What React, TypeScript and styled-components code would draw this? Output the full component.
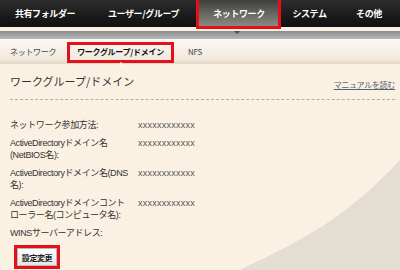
import React from "react";
import styled, { createGlobalStyle, css } from "styled-components";

const Global = createGlobalStyle`
  html, body { margin: 0; padding: 0; background: #fbf1e2; }
  body { font-family: "Liberation Sans", "Noto Sans CJK JP", sans-serif; }
`;

const Page = styled.div`
  position: relative;
  width: 400px;
  height: 270px;
  overflow: hidden;
  background: #fbf1e2;
`;

const redBox = css`
  content: "";
  position: absolute;
  border: 3px solid #e5101a;
  z-index: 5;
  pointer-events: none;
`;

const TopNav = styled.nav`
  display: flex;
  height: 27px;
  background: linear-gradient(#2e2e2e, #1a1a1a 60%, #111);
`;

const NavItem = styled.div<{ $w: number; $active?: boolean }>`
  position: relative;
  flex: 0 0 ${(p) => p.$w}px;
  display: flex;
  align-items: center;
  justify-content: center;
  color: #fff;
  font-family: "Noto Sans CJK JP", sans-serif;
  font-weight: 700;
  font-size: 9px;
  letter-spacing: -0.4px;
  ${(p) =>
    p.$active &&
    css`
      background: linear-gradient(#3e3e3c, #6a6a66 55%, #8c8c86);
      &::after {
        ${redBox};
        top: -3px;
        bottom: -2px;
        left: -1px;
        right: 0;
      }
    `}
`;

const Strip = styled.div`
  height: 8px;
  padding-left: 234px;
  box-sizing: border-box;
  background: linear-gradient(#8c8c8c, #b6b6b4);
`;

const StripArrow = styled.div`
  width: 0;
  height: 0;
  margin-top: 4px;
  border-left: 3px solid transparent;
  border-right: 3px solid transparent;
  border-top: 3px solid #4a4a4a;
`;

const SubNav = styled.div`
  display: flex;
  height: 25px;
  padding-left: 10px;
  background: linear-gradient(#fdf9f3, #f1e9de 80%, #e3d7c6);
`;

const SubItem = styled.div<{ $w: number; $indent?: number; $active?: boolean; $center?: boolean }>`
  position: relative;
  flex: 0 0 ${(p) => p.$w}px;
  box-sizing: border-box;
  padding-left: ${(p) => p.$indent ?? 0}px;
  display: flex;
  align-items: center;
  justify-content: ${(p) => (p.$center ? "center" : "flex-start")};
  font-family: "Noto Sans CJK JP", sans-serif;
  font-size: 8px;
  letter-spacing: -0.3px;
  color: ${(p) => (p.$active ? "#111" : "#444")};
  font-weight: ${(p) => (p.$active ? 700 : 400)};
  ${(p) =>
    p.$active &&
    css`
      &::after {
        ${redBox};
        top: 3px;
        bottom: 1px;
        left: 0;
        right: 0;
      }
      &::before {
        content: "";
        position: absolute;
        left: 50%;
        bottom: -1px;
        margin-left: -3px;
        border-left: 3px solid transparent;
        border-right: 3px solid transparent;
        border-bottom: 3px solid #fffaf2;
        z-index: 6;
      }
    `}
`;

const Swoosh = styled.svg`
  position: absolute;
  right: 0;
  bottom: 0;
`;

const Content = styled.main`
  position: relative;
  padding: 0 5px 0 10px;
`;

const Header = styled.div`
  display: flex;
  justify-content: space-between;
  align-items: flex-start;
  padding: 10px 0 8px;
  border-bottom: 1px dashed #b4aea6;
`;

const Title = styled.h1`
  margin: 0;
  font-family: "Noto Sans CJK JP", sans-serif;
  font-weight: 400;
  font-size: 11px;
  line-height: 14px;
  color: #333;
`;

const ManualLink = styled.a`
  margin-top: 5px;
  font-family: "Noto Sans CJK JP", sans-serif;
  font-size: 8px;
  line-height: 12px;
  letter-spacing: -0.3px;
  color: #556070;
  text-decoration: underline;
  text-underline-offset: 1px;
`;

const Fields = styled.dl`
  display: grid;
  grid-template-columns: 128px 1fr;
  row-gap: 6px;
  margin: 19px 0 0;
`;

const Label = styled.dt`
  margin: 0;
  font-size: 9px;
  line-height: 12px;
  letter-spacing: -0.4px;
  color: #333;
  white-space: nowrap;
`;

const Value = styled.dd`
  margin: 0;
  font-size: 9px;
  line-height: 12px;
  letter-spacing: 0.25px;
  color: #555;
`;

const SubmitButton = styled.button`
  position: relative;
  display: block;
  width: 40px;
  height: 18px;
  margin: 9px 0 0 7px;
  padding: 0;
  border: 1px solid #b8b8b8;
  background: linear-gradient(#ffffff, #e6e6e6);
  font-family: "Noto Sans CJK JP", sans-serif;
  font-size: 8px;
  font-weight: 700;
  letter-spacing: -0.4px;
  color: #222;
  &::after {
    ${redBox};
    top: -4px;
    bottom: -4px;
    left: -4px;
    right: -4px;
  }
`;

const navItems = [
  { label: "共有フォルダー", w: 90 },
  { label: "ユーザー/グループ", w: 107 },
  { label: "ネットワーク", w: 84, active: true },
  { label: "システム", w: 57 },
  { label: "その他", w: 62 },
];

const fields: { label: React.ReactNode; value: string }[] = [
  { label: "ネットワーク参加方法:", value: "xxxxxxxxxxxx" },
  {
    label: (
      <>
        ActiveDirectoryドメイン名
        <br />
        (NetBIOS名):
      </>
    ),
    value: "xxxxxxxxxxxx",
  },
  {
    label: (
      <>
        ActiveDirectoryドメイン名(DNS
        <br />
        名):
      </>
    ),
    value: "xxxxxxxxxxxx",
  },
  {
    label: (
      <>
        ActiveDirectoryドメインコント
        <br />
        ローラー名(コンピュータ名):
      </>
    ),
    value: "xxxxxxxxxxxx",
  },
  { label: "WINSサーバーアドレス:", value: "" },
];

export default function App() {
  return (
    <Page>
      <Global />
      <TopNav>
        {navItems.map((n) => (
          <NavItem key={n.label} $w={n.w} $active={n.active}>
            {n.label}
          </NavItem>
        ))}
      </TopNav>
      <Strip>
        <StripArrow />
      </Strip>
      <SubNav>
        <SubItem $w={57}>ネットワーク</SubItem>
        <SubItem $w={107} $active $center>
          ワークグループ/ドメイン
        </SubItem>
        <SubItem $w={50} $indent={14}>
          NFS
        </SubItem>
      </SubNav>
      <Swoosh width="170" height="120" viewBox="230 150 170 120">
        <path d="M240 270 C 290 245, 340 225, 400 160 L 400 270 Z" fill="#e4ddd2" />
      </Swoosh>
      <Content>
        <Header>
          <Title>ワークグループ/ドメイン</Title>
          <ManualLink href="#">マニュアルを読む</ManualLink>
        </Header>
        <Fields>
          {fields.map((f, i) => (
            <React.Fragment key={i}>
              <Label>{f.label}</Label>
              <Value>{f.value}</Value>
            </React.Fragment>
          ))}
        </Fields>
        <SubmitButton type="button">設定変更</SubmitButton>
      </Content>
    </Page>
  );
}
